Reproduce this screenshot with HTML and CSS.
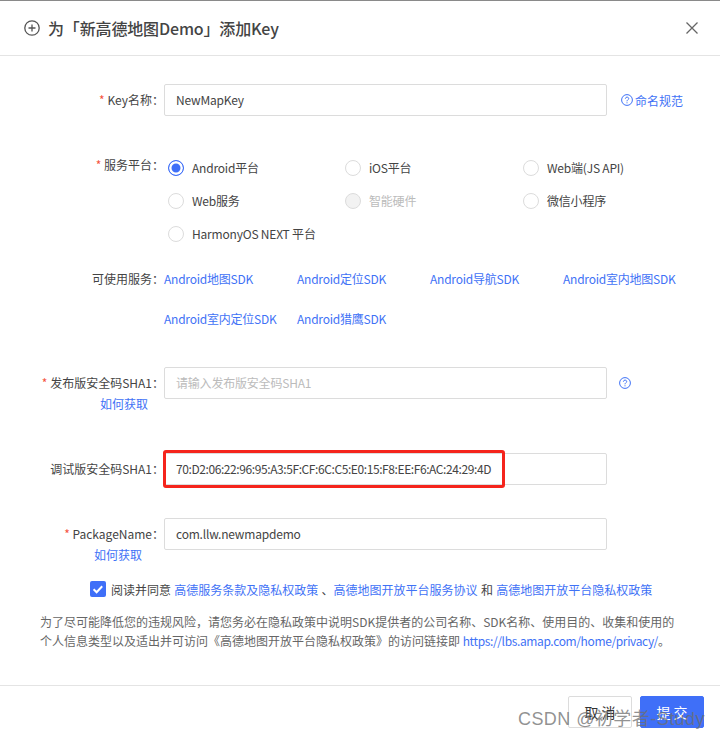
FILE: index.html
```html
<!DOCTYPE html>
<html lang="zh-CN">
<head>
  <meta charset="UTF-8">
  <title>添加Key</title>
  <link rel="stylesheet" href="styles.css">
</head>
<body>

<div class="dialog">
  <header class="head">
    <h1 class="title">
      <svg class="title-icon" width="16" height="16" viewBox="0 0 16 16"><circle cx="8" cy="8" r="7.2"/><path d="M8 4.5v7M4.5 8h7"/></svg>
      <span>为「新高德地图Demo」添加Key</span>
    </h1>
    <svg class="close" width="12" height="12" viewBox="0 0 12 12"><path d="M.5.5l11 11M11.5.5l-11 11"/></svg>
  </header>

  <form class="form">
    <div class="row row-name">
      <label class="label"><span class="req">*</span> Key名称：</label>
      <div class="input">NewMapKey</div>
      <a class="link side">
        <svg class="help" width="12" height="12" viewBox="0 0 12 12"><circle cx="6" cy="6" r="5.4"/><path d="M4.4 4.7c0-2.1 3.3-2.1 3.3-.1 0 1.2-1.7 1.2-1.7 2.7"/><path d="M6 8.3v1"/></svg>命名规范
      </a>
    </div>

    <div class="row row-platform">
      <label class="label label-top"><span class="req">*</span> 服务平台：</label>
      <div class="radios">
        <div class="radio on"><i></i>Android平台</div>
        <div class="radio"><i></i>iOS平台</div>
        <div class="radio"><i></i>Web端(JS API)</div>
        <div class="radio"><i></i>Web服务</div>
        <div class="radio off"><i></i>智能硬件</div>
        <div class="radio"><i></i>微信小程序</div>
        <div class="radio"><i></i>HarmonyOS NEXT 平台</div>
      </div>
    </div>

    <div class="row row-services">
      <label class="label label-service">可使用服务：</label>
      <div class="services">
        <a class="link">Android地图SDK</a>
        <a class="link">Android定位SDK</a>
        <a class="link">Android导航SDK</a>
        <a class="link">Android室内地图SDK</a>
        <a class="link">Android室内定位SDK</a>
        <a class="link">Android猎鹰SDK</a>
      </div>
    </div>

    <div class="row row-release">
      <div class="label-wrap">
        <label class="label"><span class="req">*</span> 发布版安全码SHA1：</label>
        <a class="link how how-release">如何获取</a>
      </div>
      <div class="input empty">请输入发布版安全码SHA1</div>
      <svg class="help help-alone" width="12" height="12" viewBox="0 0 12 12"><circle cx="6" cy="6" r="5.4"/><path d="M4.4 4.7c0-2.1 3.3-2.1 3.3-.1 0 1.2-1.7 1.2-1.7 2.7"/><path d="M6 8.3v1"/></svg>
    </div>

    <div class="row row-debug">
      <label class="label">调试版安全码SHA1：</label>
      <div class="input">
        <span class="sha">70:D2:06:22:96:95:A3:5F:CF:6C:C5:E0:15:F8:EE:F6:AC:24:29:4D</span>
        <span class="mark"></span>
      </div>
    </div>

    <div class="row row-package">
      <div class="label-wrap">
        <label class="label"><span class="req">*</span> PackageName：</label>
        <a class="link how how-package">如何获取</a>
      </div>
      <div class="input">com.llw.newmapdemo</div>
    </div>

    <div class="agree">
      <span class="check"><svg width="16" height="16" viewBox="0 0 16 16"><path d="M3.6 8.2l3 3 5.6-6"/></svg></span>
      <span>阅读并同意 <a class="link">高德服务条款及隐私权政策</a> 、<a class="link">高德地图开放平台服务协议</a> 和 <a class="link">高德地图开放平台隐私权政策</a></span>
    </div>

    <p class="note">为了尽可能降低您的违规风险，请您务必在隐私政策中说明SDK提供者的公司名称、SDK名称、使用目的、收集和使用的<br>个人信息类型以及适出并可访问《高德地图开放平台隐私权政策》的访问链接即 <a class="link url">https://lbs.amap.com/home/privacy/</a>。</p>
  </form>

  <footer class="foot">
    <button class="btn" type="button">取 消</button>
    <button class="btn primary" type="button">提 交</button>
  </footer>
</div>

<div class="watermark">CSDN @初学者-Study</div>

</body>
</html>
```

FILE: styles.css
```css
*, *:after, *:before {
  box-sizing: border-box;
}
html, body {
  margin: 0;
  height: 738px;
  overflow: hidden;
}
body {
  background: #fff;
  color: #444;
  font-family: "Noto Sans CJK SC", sans-serif;
  font-size: 12px;
  position: relative;
}
a {
  text-decoration: none;
}
.dialog {
  border-top: 1px solid #8a8a8a;
  display: flex;
  flex-direction: column;
  height: 738px;
}
.head {
  align-items: center;
  border-bottom: 1px solid #e4e4e4;
  display: flex;
  flex: none;
  height: 55px;
  justify-content: space-between;
  padding: 0 22px 0 24px;
}
.title {
  align-items: center;
  color: #444;
  display: flex;
  font-size: 16px;
  font-weight: 500;
  gap: 8px;
  letter-spacing: -.15px;
  margin: 0;
}
.title-icon {
  fill: none;
  stroke: #555;
  stroke-width: 1.3;
}
.close {
  fill: none;
  stroke: #666;
  stroke-width: 1.3;
}
.form {
  flex: 1;
  padding-top: 28px;
}
.row {
  display: grid;
  grid-template-columns: 164px 443px auto;
}
.row-name { margin-bottom: 35px; }
.row-platform { margin-bottom: 10px; }
.row-services { margin-bottom: 27px; }
.row-release { height: 46px; margin-bottom: 40px; }
.row-debug { margin-bottom: 33px; }
.row-package { height: 45px; margin-bottom: 18px; }
.label {
  display: block;
  line-height: 32px;
  text-align: right;
  white-space: nowrap;
}
.label-top {
  line-height: 28px;
}
.label-service {
  line-height: 38px;
}
.req {
  color: #f5533d;
}
.label-wrap {
  display: flex;
  flex-direction: column;
  align-items: flex-end;
}
.how {
  line-height: 14px;
  margin-top: -2px;
}
.how-release { margin-right: 16px; }
.how-package { margin-right: 22px; }
.input {
  border: 1px solid #dcdcdc;
  border-radius: 2px;
  height: 32px;
  letter-spacing: -.2px;
  line-height: 30px;
  padding: 0 11px;
  position: relative;
  white-space: nowrap;
}
.input.empty {
  color: #bbb;
}
.sha {
  letter-spacing: -.41px;
}
.mark {
  border: 3px solid #f5241c;
  border-radius: 3px;
  height: 38px;
  left: -2px;
  position: absolute;
  top: -4px;
  width: 342px;
}
.link {
  color: #3f72f6;
}
.side {
  align-items: center;
  display: flex;
  gap: 2px;
  margin-left: 14px;
}
.help {
  fill: none;
  stroke: #3f72f6;
  stroke-width: 1;
}
.help-alone {
  align-self: center;
  margin-left: 12px;
  margin-top: 1px;
}
.row-release .help-alone {
  align-self: start;
  margin-top: 10px;
}
.radios {
  display: grid;
  grid-auto-rows: 33px;
  grid-template-columns: 177px 178px 177px;
  letter-spacing: -.2px;
  padding-left: 4px;
  margin-right: -100px;
}
.radio {
  align-items: center;
  display: flex;
  gap: 8px;
  white-space: nowrap;
}
.radio i {
  background: #fff;
  border: 1px solid #dcdcdc;
  border-radius: 50%;
  display: block;
  flex: none;
  height: 16px;
  width: 16px;
}
.radio.on i {
  border: 1px solid #3f6ff8;
  box-shadow: inset 0 0 0 2.5px #fff;
  background: #3f6ff8;
}
.radio.off {
  color: #bbb;
}
.radio.off i {
  background: #f2f2f2;
}
.services {
  display: grid;
  grid-auto-rows: 40px;
  grid-template-columns: repeat(4, 133px);
  letter-spacing: -.23px;
  line-height: 38px;
  margin-right: -100px;
  white-space: nowrap;
}
.agree {
  align-items: center;
  display: flex;
  height: 16px;
  padding-left: 90px;
  white-space: nowrap;
  word-spacing: .6px;
}
.check {
  background: #3f6ff8;
  border-radius: 2px;
  flex: none;
  height: 16px;
  margin-right: 5px;
  width: 16px;
}
.check svg {
  display: block;
  fill: none;
  stroke: #fff;
  stroke-width: 2;
}
.note {
  color: #666;
  line-height: 18.5px;
  margin: 16px 0 0 40px;
  white-space: nowrap;
}
.url {
  letter-spacing: -.37px;
}
.foot {
  border-top: 1px solid #e4e4e4;
  display: flex;
  flex: none;
  gap: 8px;
  height: 53px;
  justify-content: flex-end;
  padding: 10px 16px 0 0;
}
.btn {
  background: #fff;
  border: 1px solid #dcdcdc;
  border-radius: 2px;
  color: #333;
  font-family: inherit;
  font-size: 14px;
  height: 32px;
  padding: 0;
  width: 64px;
}
.btn.primary {
  background: #3f6ff8;
  border-color: #3f6ff8;
  color: #fff;
}
.watermark {
  bottom: 8px;
  color: rgba(110, 110, 110, .75);
  font-family: "Liberation Sans", "Noto Sans CJK SC", sans-serif;
  font-size: 18px;
  letter-spacing: .45px;
  position: absolute;
  right: 15px;
  white-space: nowrap;
}
```
